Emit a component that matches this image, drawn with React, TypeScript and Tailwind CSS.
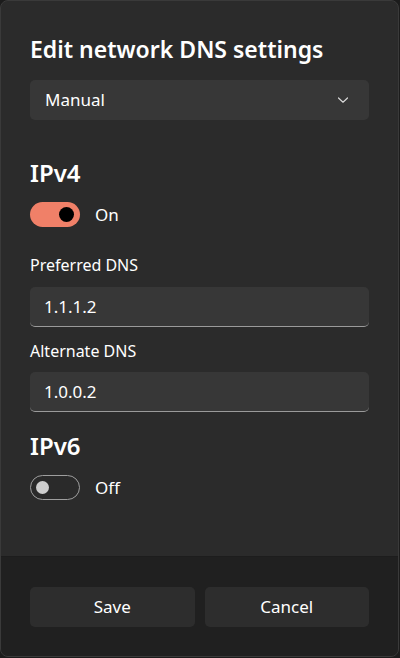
import React, { useState } from 'react';

const font = { fontFamily: '"Segoe UI", "Noto Sans", "Open Sans", sans-serif' };

const Toggle: React.FC<{ on: boolean; onChange: () => void }> = ({ on, onChange }) => (
  <button onClick={onChange} className="flex items-center gap-[15px]">
    {on ? (
      <span className="w-[50px] h-[25px] rounded-full bg-[#f08068] flex items-center justify-end pr-[6px]">
        <span className="w-[15px] h-[15px] rounded-full bg-black" />
      </span>
    ) : (
      <span className="w-[50px] h-[25px] rounded-full border border-[#9e9e9e] bg-[#2a2a2a] flex items-center pl-[5px]">
        <span className="w-[13px] h-[13px] rounded-full bg-[#cecece]" />
      </span>
    )}
    <span className="text-[17px] text-white leading-none">{on ? 'On' : 'Off'}</span>
  </button>
);

const Field: React.FC<{ value: string }> = ({ value }) => (
  <div className="h-[40px] rounded-[5px] bg-[#373737] border-b border-[#9a9a9a] flex items-center px-[14px]">
    <span className="text-[17px] text-white">{value}</span>
  </div>
);

export default function App() {
  const [v4, setV4] = useState(true);
  const [v6, setV6] = useState(false);

  return (
    <div className="w-[400px] h-[658px] bg-[#1c1c1c]" style={font}>
      <div className="w-[399px] h-[657px] rounded-[8px] border border-[#3a3a3a] bg-[#2b2b2b] flex flex-col overflow-hidden">
        <div className="flex-1 px-[29px] flex flex-col">
          <h1 className="mt-[32px] text-[23px] leading-[32px] font-semibold text-white">Edit network DNS settings</h1>
          <div className="mt-[15px] h-[40px] rounded-[5px] bg-[#373737] flex items-center justify-between px-[15px]">
            <span className="text-[17px] text-white">Manual</span>
            <svg width="12" height="8" viewBox="0 0 12 8" className="mr-[5px]">
              <path d="M1.5 2 L6 6.2 L10.5 2" fill="none" stroke="#d8d8d8" strokeWidth="1.2" strokeLinecap="round" strokeLinejoin="round" />
            </svg>
          </div>

          <h2 className="mt-[37px] text-[24px] leading-[32px] font-semibold text-white">IPv4</h2>
          <div className="mt-[13px]">
            <Toggle on={v4} onChange={() => setV4(!v4)} />
          </div>

          <label className="mt-[26px] text-[16px] leading-[24px] text-white">Preferred DNS</label>
          <div className="mt-[10px]">
            <Field value="1.1.1.2" />
          </div>
          <label className="mt-[12px] text-[16px] leading-[24px] text-white">Alternate DNS</label>
          <div className="mt-[9px]">
            <Field value="1.0.0.2" />
          </div>

          <h2 className="mt-[18px] text-[24px] leading-[32px] font-semibold text-white">IPv6</h2>
          <div className="mt-[13px]">
            <Toggle on={v6} onChange={() => setV6(!v6)} />
          </div>
        </div>

        <div className="h-[100px] bg-[#202020] border-t border-[#1d1d1d] px-[29px] pt-[30px] grid grid-cols-2 gap-[10px] content-start">
          <button className="h-[40px] rounded-[5px] bg-[#2d2d2d] text-[17px] text-white">Save</button>
          <button className="h-[40px] rounded-[5px] bg-[#2d2d2d] text-[17px] text-white">Cancel</button>
        </div>
      </div>
    </div>
  );
}
